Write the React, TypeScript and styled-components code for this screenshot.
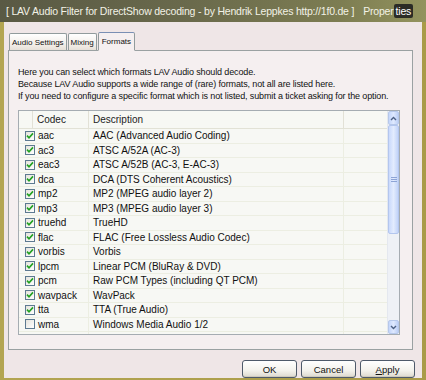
import React from 'react'
import styled, { createGlobalStyle } from 'styled-components'

const Global = createGlobalStyle`
	html, body {
		margin: 0;
		padding: 0;
		background: #a99b48;
	}
	body {
		font-family: "Liberation Sans", Arial, sans-serif;
	}
`

const Window = styled.div`
	width: 426px;
	height: 380px;
	display: flex;
	flex-direction: column;
	background: linear-gradient(90deg, #b3a552 0%, #a99b48 100%);
	overflow: hidden;
`

const TitleBar = styled.div`
	height: 22px;
	flex: none;
	display: flex;
	align-items: center;
	gap: 9px;
	padding: 0 0 0 6px;
	background: linear-gradient(90deg, #595944 0%, #6a6a4c 45%, #7d7d52 80%, #93935e 100%);
	color: #f2f2e6;
	font-size: 10.5px;
	letter-spacing: -0.2px;
	white-space: nowrap;
	overflow: hidden;
`

const CloseMark = styled.span`
	background: #2b2b26;
	color: #ffffff;
	padding: 1px 2px;
	border-radius: 2px;
`

const Frame = styled.div`
	flex: 1;
	margin: 0 4px 2px 4px;
	background: #efe6e7;
	display: flex;
	flex-direction: column;
	padding: 9px 7px 0 4px;
	min-height: 0;
`

const TabRow = styled.div`
	display: flex;
	align-items: flex-end;
	height: 19px;
	padding-left: 1px;
	gap: 1px;
	position: relative;
	z-index: 1;
`

const Tab = styled.div<{ $active?: boolean }>`
	height: ${p => (p.$active ? 19 : 17)}px;
	box-sizing: border-box;
	padding: 0 ${p => (p.$active ? 3 : 2)}px;
	display: flex;
	align-items: center;
	font-size: 8px;
	color: #111;
	border: 1px solid #919b9c;
	border-bottom: ${p => (p.$active ? '1px solid #f5eff0' : 'none')};
	border-top-color: ${p => (p.$active ? '#7a8fb4' : '#919b9c')};
	border-radius: 2px 2px 0 0;
	background: ${p =>
		p.$active ? '#f5eff0' : 'linear-gradient(#ffffff, #f1ece6 70%, #e6e0d8)'};
	margin-bottom: ${p => (p.$active ? -1 : 0)}px;
`

const Panel = styled.div`
	height: 300px;
	margin-right: 2px;
	box-sizing: border-box;
	border: 1px solid #9aa1a2;
	background: #f5eff0;
	padding: 15px 12px 0 9px;
	display: flex;
	flex-direction: column;
`

const Intro = styled.p`
	margin: 0;
	font-size: 9px;
	line-height: 12px;
	letter-spacing: -0.13px;
	color: #111;
`

const List = styled.div`
	margin-top: 8px;
	height: 225px;
	box-sizing: border-box;
	border: 1px solid #a5acb2;
	background: #f7f8f4;
	display: flex;
	overflow: hidden;
`

const Rows = styled.div`
	flex: 1;
	display: flex;
	flex-direction: column;
	overflow: hidden;
`

const Grid = styled.div`
	display: grid;
	grid-template-columns: 14px 56px 255px 1fr;
`

const HeaderRow = styled(Grid)`
	height: 18px;
	flex: none;
	border-bottom: 1px solid #e2e2d6;
	box-sizing: border-box;
`

const HeadCell = styled.div`
	display: flex;
	align-items: center;
	padding-left: 4px;
	font-size: 10px;
	color: #222;
	border-right: 1px solid #e2e1d6;
	&:last-child {
		border-right: none;
	}
`

const Row = styled(Grid)`
	height: 14.5px;
	flex: none;
	border-bottom: 1px solid #eceee2;
	box-sizing: border-box;
`

const Cell = styled.div<{ $span?: boolean }>`
	display: flex;
	align-items: center;
	font-size: 10px;
	color: #111;
	white-space: nowrap;
	overflow: hidden;
	padding-left: ${p => (p.$span ? 6 : 4)}px;
	grid-column: ${p => (p.$span ? 'span 2' : 'auto')};
	border-right: 1px solid #eceee2;
	&:last-child {
		border-right: none;
	}
`

const CheckBox = styled.span`
	width: 10px;
	height: 10px;
	box-sizing: border-box;
	border: 1px solid #5d7a91;
	background: linear-gradient(135deg, #e4e3dc, #ffffff);
	margin-right: 3px;
	flex: none;
	display: flex;
	align-items: center;
	justify-content: center;
`

const ScrollBar = styled.div`
	width: 11px;
	flex: none;
	display: flex;
	flex-direction: column;
	background: #eef1f6;
	border-left: 1px solid #e4e8ef;
`

const ArrowBtn = styled.div`
	height: 14px;
	flex: none;
	box-sizing: border-box;
	border: 1px solid #b6c8ea;
	border-radius: 2px;
	background: linear-gradient(90deg, #c4d6fb, #dfe9fe 50%, #bccff6);
	display: flex;
	align-items: center;
	justify-content: center;
`

const Thumb = styled.div`
	height: 109px;
	flex: none;
	box-sizing: border-box;
	border: 1px solid #b3c6ee;
	border-radius: 2px;
	background: linear-gradient(90deg, #c9d9fc, #e3ecfe 50%, #c1d3f8);
	display: flex;
	align-items: center;
	justify-content: center;
`

const Track = styled.div`
	flex: 1;
`

const Footer = styled.div`
	flex: 1;
	display: flex;
	justify-content: flex-end;
	align-items: flex-end;
	gap: 4px;
`

const Button = styled.div`
	width: 55px;
	height: 18px;
	box-sizing: border-box;
	border: 1px solid #4e5a6a;
	border-radius: 3px;
	background: linear-gradient(#ffffff, #f3f2ec 60%, #dcd9cf);
	box-shadow: inset 0 -1px 0 #cfcabd;
	display: flex;
	align-items: center;
	justify-content: center;
	font-size: 9.5px;
	color: #111;
	u {
		text-decoration: underline;
	}
`

const formats: [string, string, boolean][] = [
	['aac', 'AAC (Advanced Audio Coding)', true],
	['ac3', 'ATSC A/52A (AC-3)', true],
	['eac3', 'ATSC A/52B (AC-3, E-AC-3)', true],
	['dca', 'DCA (DTS Coherent Acoustics)', true],
	['mp2', 'MP2 (MPEG audio layer 2)', true],
	['mp3', 'MP3 (MPEG audio layer 3)', true],
	['truehd', 'TrueHD', true],
	['flac', 'FLAC (Free Lossless Audio Codec)', true],
	['vorbis', 'Vorbis', true],
	['lpcm', 'Linear PCM (BluRay & DVD)', true],
	['pcm', 'Raw PCM Types (including QT PCM)', true],
	['wavpack', 'WavPack', true],
	['tta', 'TTA (True Audio)', true],
	['wma', 'Windows Media Audio 1/2', false],
	['wmapro', 'Windows Media Audio 9 Professional', false],
]

const Check = () => (
	<svg width="8" height="8" viewBox="0 0 8 8">
		<path d="M1 3.6 L3 5.8 L7 1.4" fill="none" stroke="#21a121" strokeWidth="1.6" />
	</svg>
)

const Chevron = ({ up }: { up?: boolean }) => (
	<svg width="7" height="5" viewBox="0 0 7 5">
		<path
			d={up ? 'M1 4 L3.5 1.5 L6 4' : 'M1 1 L3.5 3.5 L6 1'}
			fill="none"
			stroke="#4d6185"
			strokeWidth="1.4"
		/>
	</svg>
)

const Grip = () => (
	<svg width="6" height="6" viewBox="0 0 6 6">
		{[0, 2, 4].map(y => (
			<rect key={y} x="0" y={y} width="6" height="1" fill="#8da4d6" />
		))}
	</svg>
)

export default function App() {
	return (
		<>
			<Global />
			<Window>
				<TitleBar>
					<span>[ LAV Audio Filter for DirectShow decoding - by Hendrik Leppkes http://1f0.de ]</span>
					<span>
						Proper<CloseMark>ties</CloseMark>
					</span>
				</TitleBar>
				<Frame>
					<TabRow>
						<Tab>Audio Settings</Tab>
						<Tab>Mixing</Tab>
						<Tab $active>Formats</Tab>
					</TabRow>
					<Panel>
						<Intro>
							Here you can select which formats LAV Audio should decode.
							<br />
							Because LAV Audio supports a wide range of (rare) formats, not all are listed here.
							<br />
							If you need to configure a specific format which is not listed, submit a ticket asking
							for the option.
						</Intro>
						<List>
							<Rows>
								<HeaderRow>
									<HeadCell />
									<HeadCell>Codec</HeadCell>
									<HeadCell>Description</HeadCell>
									<HeadCell />
								</HeaderRow>
								{formats.map(([codec, desc, on]) => (
									<Row key={codec}>
										<Cell $span>
											<CheckBox>{on && <Check />}</CheckBox>
											{codec}
										</Cell>
										<Cell>{desc}</Cell>
										<Cell />
									</Row>
								))}
							</Rows>
							<ScrollBar>
								<ArrowBtn>
									<Chevron up />
								</ArrowBtn>
								<Thumb>
									<Grip />
								</Thumb>
								<Track />
								<ArrowBtn>
									<Chevron />
								</ArrowBtn>
							</ScrollBar>
						</List>
					</Panel>
					<Footer>
						<Button>OK</Button>
						<Button>Cancel</Button>
						<Button>
							<span>
								<u>A</u>pply
							</span>
						</Button>
					</Footer>
				</Frame>
			</Window>
		</>
	)
}
